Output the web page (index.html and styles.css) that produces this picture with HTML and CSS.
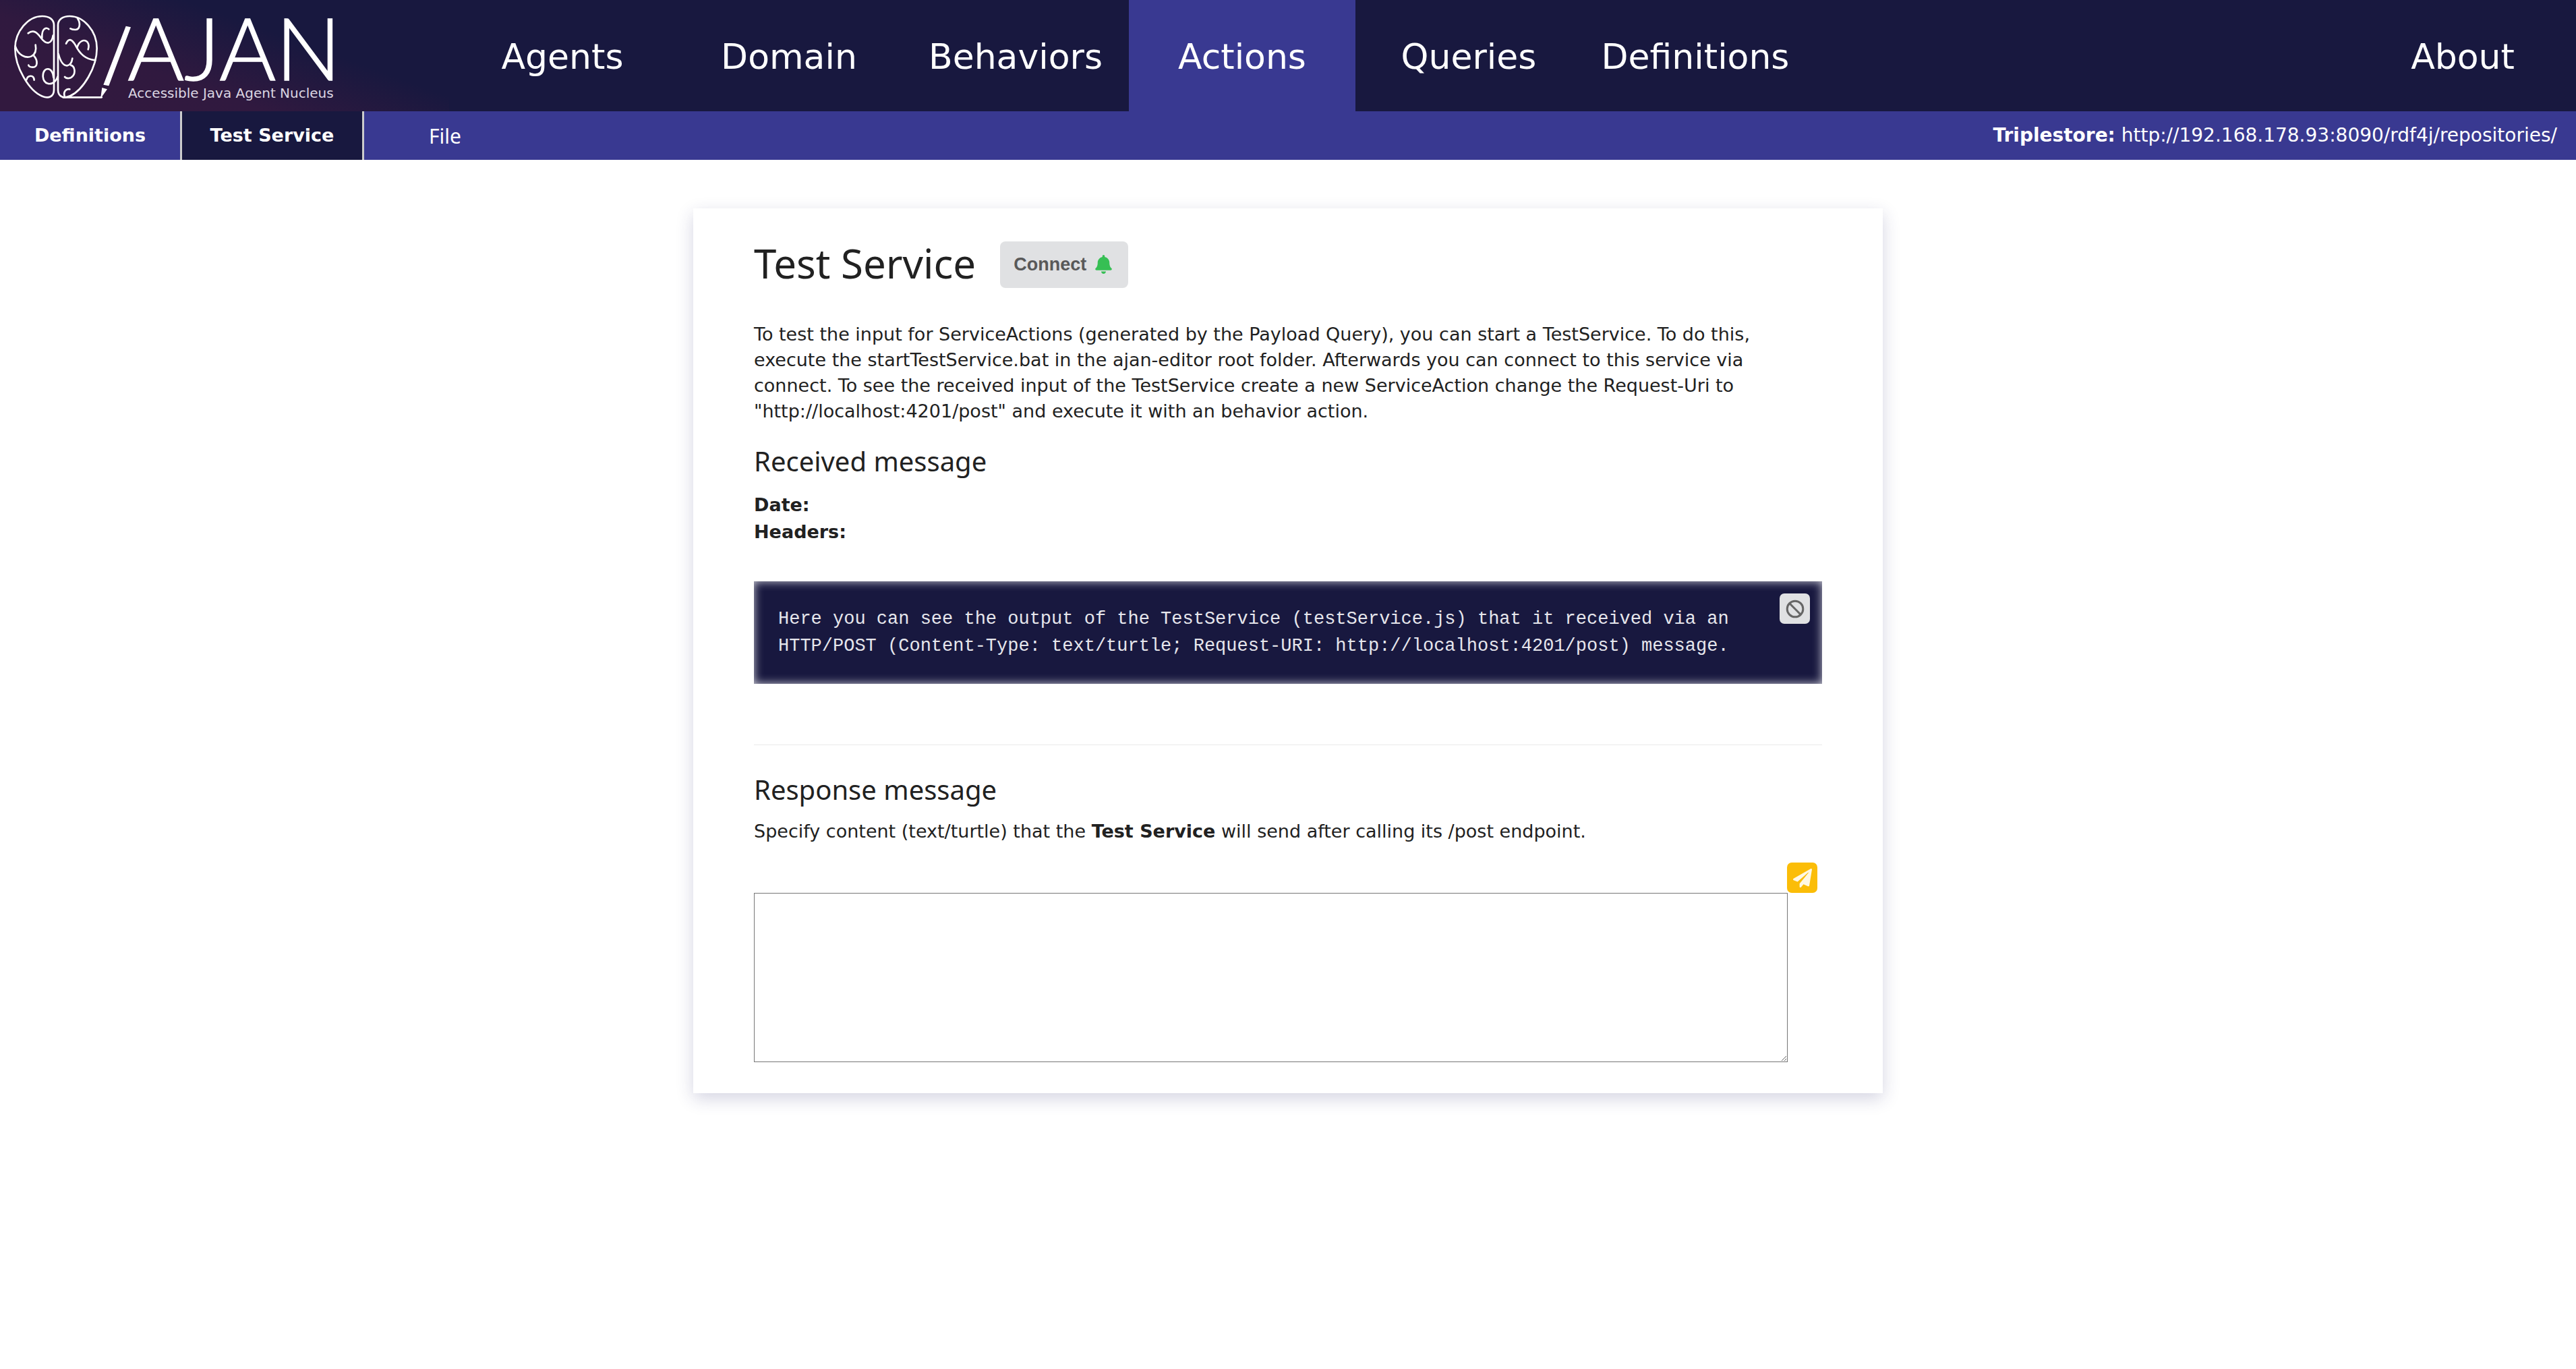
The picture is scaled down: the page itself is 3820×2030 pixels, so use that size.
FILE: index.html
```html
<!DOCTYPE html>
<html lang="en">
<head>
<meta charset="utf-8">
<title>AJAN - Test Service</title>
<link rel="stylesheet" href="styles.css">
</head>
<body>
<header class="topbar">
  <a class="logo" href="#" aria-label="AJAN home">
    <svg class="logo-art" viewBox="0 0 1680 495" aria-hidden="true">
      <g class="brain">
        <path d="M240 112C240 86 218 72 188 72C125 72 67 140 67 215C67 300 130 405 188 428C216 440 240 430 240 400Z"/>
        <path d="M258 112C258 86 280 72 310 72C370 72 431 135 431 215C431 300 370 400 312 427C283 440 258 430 258 400Z"/>
        <path d="M125 148C150 130 165 145 182 168C205 200 230 198 236 158"/>
        <path d="M217 130C200 116 185 135 187 168"/>
        <path d="M68 205C80 245 115 262 140 250C158 240 162 220 158 200"/>
        <path d="M150 247C170 270 168 300 145 299C135 298 128 295 127 290"/>
        <path d="M118 355C122 335 150 330 152 356"/>
        <path d="M238 345C236 295 190 295 191 340C194 375 225 382 246 360C252 354 253 350 256 342"/>
        <path d="M345 82C360 105 355 132 335 132C325 132 318 130 313 127"/>
        <path d="M294 194C305 170 318 172 335 200C355 240 380 264 424 268"/>
        <path d="M343 212C352 180 375 174 388 186C396 196 396 208 392 220"/>
        <path d="M260 240C268 270 280 292 298 292C315 290 320 275 322 260"/>
        <path d="M315 290C335 295 335 325 325 337C315 352 295 350 288 342"/>
        <path d="M310 397C295 393 281 407 287 427"/>
        <path d="M280 433H452"/>
      </g>
      <path class="pencil" d="M560 116L582 121L484 382L460 377ZM454 390L477 397L452 432L448 432Z"/>
      <text class="logo-name" x="568" y="358">AJAN</text>
      <text class="logo-claim" x="570" y="434">Accessible Java Agent Nucleus</text>
    </svg>
  </a>
  <nav class="mainnav">
    <a class="navlink" href="#">Agents</a>
    <a class="navlink" href="#">Domain</a>
    <a class="navlink" href="#">Behaviors</a>
    <a class="navlink active" href="#">Actions</a>
    <a class="navlink" href="#">Queries</a>
    <a class="navlink" href="#">Definitions</a>
    <a class="navlink about" href="#">About</a>
  </nav>
</header>
<div class="subbar">
  <nav class="tabs">
    <a class="tab" href="#">Definitions</a>
    <a class="tab current" href="#">Test Service</a>
  </nav>
  <button class="file" type="button">File</button>
  <p class="store"><b>Triplestore:</b> http://192.168.178.93:8090/rdf4j/repositories/</p>
</div>
<main class="card">
  <div class="titlerow">
    <h1 class="title">Test Service</h1>
    <button class="connect" type="button">Connect
      <svg class="bell" viewBox="0 0 448 512" aria-hidden="true"><path d="M224 512c35.320 0 63.970-28.650 63.970-64H160.030c0 35.350 28.650 64 63.970 64zm215.390-149.710c-19.320-20.760-55.470-51.990-55.470-154.290 0-77.700-54.480-139.900-127.940-155.160V32c0-17.670-14.320-32-31.980-32s-31.980 14.330-31.980 32v20.840C118.560 68.100 64.080 130.300 64.080 208c0 102.300-36.150 133.530-55.470 154.290-6 6.450-8.660 14.160-8.610 21.710.110 16.400 12.980 32 32.100 32h383.800c19.120 0 32-15.600 32.100-32 .050-7.550-2.610-15.270-8.610-21.710z"/></svg>
    </button>
  </div>
  <p class="intro">To test the input for ServiceActions (generated by the Payload Query), you can start a TestService. To do this, execute the startTestService.bat in the ajan-editor root folder. Afterwards you can connect to this service via connect. To see the received input of the TestService create a new ServiceAction change the Request-Uri to "http://localhost:4201/post" and execute it with an behavior action.</p>
  <h2 class="heading">Received message</h2>
  <dl class="meta">
    <dt>Date:</dt>
    <dt>Headers:</dt>
  </dl>
  <div class="console">
    <p class="output">Here you can see the output of the TestService (testService.js) that it received via an HTTP/POST (Content-Type: text/turtle; Request-URI: http://localhost:4201/post) message.</p>
    <button class="iconbtn clear" type="button" aria-label="Clear message">
      <svg class="icon" viewBox="0 0 28 28" aria-hidden="true"><circle cx="14" cy="14" r="11.800"/><path d="M5.800 5.800L22.200 22.200"/></svg>
    </button>
  </div>
  <hr class="rule">
  <h2 class="heading">Response message</h2>
  <label class="hint" for="response">Specify content (text/turtle) that the <b>Test Service</b> will send after calling its /post endpoint.</label>
  <div class="sendrow">
    <button class="iconbtn send" type="button" aria-label="Send response">
      <svg class="icon plane" viewBox="0 0 512 512" aria-hidden="true"><path d="M476 3.200L12.500 270.600c-18.100 10.400-15.800 35.600 2.200 43.200L121 358.400l287.300-253.200c5.500-4.900 13.300 2.600 8.600 8.300L176 407v80.500c0 23.600 28.500 32.900 42.500 15.800L282 426l124.600 52.200c14.200 6 30.400-2.900 33-18.200l72-432C515 7.800 493.300-6.800 476 3.200z"/></svg>
    </button>
  </div>
  <textarea class="response" id="response"></textarea>
</main>
</body>
</html>
```
FILE: styles.css
```css
* {
  box-sizing: border-box;
}

body {
  margin: 0;
  background: #fff;
  color: #212121;
  font-family: Verdana, "DejaVu Sans", sans-serif;
  font-size: 27px;
  line-height: 38px;
}

h1, h2, p, dl {
  margin: 0;
}

a {
  color: inherit;
  text-decoration: none;
}

button {
  border: 0;
  cursor: pointer;
}

/* Top navigation */
.topbar {
  display: flex;
  height: 165px;
  background: #18183f;
  color: #fff;
}

.logo {
  flex: none;
  width: 666px;
  background: linear-gradient(20deg, #32193f 15%, #30193f 35%, #18183f 65%);
}

.logo-art {
  display: block;
  width: 560px;
  height: 165px;
  overflow: visible;
}

.brain {
  fill: none;
  stroke: #fff;
  stroke-width: 8;
  stroke-linecap: round;
}

.pencil {
  fill: #fff;
}

.logo-name {
  fill: #fff;
  stroke: #fff;
  stroke-width: 5;
  font-family: Lato, sans-serif;
  font-weight: 300;
  font-size: 384px;
}

.logo-claim {
  fill: #dcd6e2;
  font-size: 60px;
}

.mainnav {
  display: flex;
  flex: 1;
}

.navlink {
  display: flex;
  align-items: center;
  justify-content: center;
  width: 336px;
  padding-top: 3px;
  font-size: 52px;
}

.navlink.active {
  background: #393991;
}

.about {
  margin-left: auto;
}

/* Secondary bar */
.subbar {
  display: flex;
  align-items: center;
  height: 72px;
  padding-right: 28px;
  background: #393991;
  color: #fff;
}

.tabs {
  display: flex;
  align-self: stretch;
}

.tab {
  display: flex;
  align-items: center;
  justify-content: center;
  width: 270px;
  border-right: 3px solid #ccc;
  font-weight: bold;
}

.tab.current {
  background: #18183f;
}

.file {
  width: 240px;
  background: none;
  color: inherit;
  font: 30px "Noto Sans", sans-serif;
}

.store {
  margin-left: auto;
  font-size: 28px;
}

/* Content card */
.card {
  max-width: 1764px;
  margin: 72px auto;
  padding: 38px 90px 46px;
  box-shadow: 0 8px 24px rgba(40, 40, 110, 0.2);
}

.titlerow {
  display: flex;
  align-items: center;
  gap: 36px;
  height: 90px;
}

.title {
  padding-bottom: 4px;
  font: 60px/88px "Noto Sans", sans-serif;
}

.connect {
  display: flex;
  align-items: center;
  justify-content: space-between;
  width: 190px;
  height: 69px;
  padding: 0 24px 0 20px;
  border-radius: 8px;
  background: #e0e1e3;
  color: #595959;
  font: bold 27px "Liberation Sans", Arial, sans-serif;
}

.bell {
  width: 25px;
  height: 28px;
  fill: #36bf54;
}

.intro {
  margin-top: 40px;
  padding-right: 60px;
}

.heading {
  margin-top: 25px;
  font: 40px/60px "Noto Sans", sans-serif;
}

.meta {
  margin-top: 15px;
  font-weight: bold;
  line-height: 40px;
}

.console {
  display: flex;
  justify-content: space-between;
  align-items: flex-start;
  margin-top: 53px;
  padding: 18px 18px 36px 36px;
  background: #18183f;
  box-shadow: inset 0 0 14px #cfcfd8;
}

.output {
  flex: 0 1 1450px;
  padding-top: 18px;
  color: #e6e6ec;
  font: 27px/40px "Courier New", "Liberation Mono", monospace;
}

.iconbtn {
  display: flex;
  align-items: center;
  justify-content: center;
  width: 45px;
  height: 45px;
  padding: 0;
  border-radius: 7px;
}

.icon {
  width: 28px;
  height: 28px;
}

.clear {
  background: #e0e1e3;
}

.clear .icon {
  fill: none;
  stroke: #666;
  stroke-width: 3;
}

.rule {
  margin: 90px 0 0;
  border: 0;
  border-top: 1px solid #eaeaea;
}

.rule + .heading {
  margin-top: 36px;
}

.hint {
  display: block;
  margin-top: 13px;
}

.sendrow {
  display: flex;
  justify-content: flex-end;
  margin-top: 27px;
  padding-right: 7px;
}

.send {
  background: #fbbd08;
}

.plane {
  fill: #fff8e4;
}

.response {
  display: block;
  width: calc(100% - 51px);
  height: 251px;
  border: 1px solid #767676;
  font: inherit;
}
```
